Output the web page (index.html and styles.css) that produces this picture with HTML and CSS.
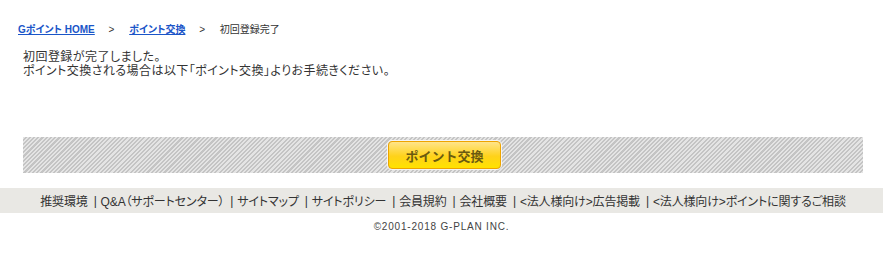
FILE: index.html
```html
<!DOCTYPE html>
<html>
<head>
  <title>初回登録完了</title>
  <link rel="stylesheet" href="styles.css">
</head>
<body>
  <div class="breadcrumb">
    <a href="#">Gポイント HOME</a>
    <span class="sep">&gt;</span>
    <a href="#">ポイント交換</a>
    <span class="sep">&gt;</span>
    <span class="current">初回登録完了</span>
  </div>

  <div class="message">
    <p>初回登録が完了しました。</p>
    <p>ポイント交換される場合は以下「ポイント交換」よりお手続きください。</p>
  </div>

  <div class="action-band">
    <button class="exchange-btn">ポイント交換</button>
  </div>

  <div class="footer-links">
    <a href="#">推奨環境</a><span class="bar">|</span><a href="#">Q&amp;A（サポートセンター）</a><span class="bar">|</span><a href="#">サイトマップ</a><span class="bar">|</span><a href="#">サイトポリシー</a><span class="bar">|</span><a href="#">会員規約</a><span class="bar">|</span><a href="#">会社概要</a><span class="bar">|</span><a href="#">&lt;法人様向け&gt;広告掲載</a><span class="bar">|</span><a href="#">&lt;法人様向け&gt;ポイントに関するご相談</a>
  </div>

  <div class="copyright">&copy;2001-2018 G-PLAN INC.</div>
</body>
</html>
```

FILE: styles.css
```css
body {
  font-family: "Liberation Sans", "Noto Sans CJK JP", sans-serif;
  font-feature-settings: "palt";
  color: #333;
  background-color: #fff;
  margin: 0;
  padding: 0;
}

.breadcrumb {
  font-size: 10px;
  padding: 21px 0 0 18px;
  height: 16px;
}

.breadcrumb a {
  color: #1a55c8;
  font-weight: bold;
  text-decoration: underline;
}

.breadcrumb .sep {
  margin: 0 12px 0 11px;
}

.breadcrumb .current {
  color: #333;
}

.message {
  font-size: 12px;
  letter-spacing: 0.45px;
  padding: 13px 0 0 23px;
  height: 87px;
}

.message p {
  margin: 0;
  line-height: 14px;
}

.action-band {
  margin: 0 20px 0 23px;
  height: 36px;
  display: flex;
  align-items: center;
  justify-content: center;
  background: repeating-linear-gradient(-45deg, #e4e4e4 0, #e4e4e4 1.5px, #c4c4c4 1.5px, #c4c4c4 3px);
}

.exchange-btn {
  width: 113px;
  height: 28px;
  margin-left: 3px;
  font-family: inherit;
  font-size: 13px;
  font-weight: bold;
  color: #6a5a10;
  background: linear-gradient(#ffe48a, #ffd21a 55%, #ffe200);
  border: 1px solid #eea400;
  border-radius: 4px;
  box-shadow: 0 0 0 1px #f4f4f4;
  cursor: pointer;
}

.footer-links {
  margin-top: 15px;
  height: 25px;
  background-color: #e9e8e4;
  display: flex;
  align-items: center;
  justify-content: center;
  font-size: 12px;
  letter-spacing: -0.15px;
  padding-left: 3px;
}

.footer-links a {
  color: #333;
  text-decoration: none;
}

.footer-links .bar {
  margin: 0 4px 0 6px;
}

.copyright {
  text-align: center;
  font-size: 10px;
  color: #444;
  margin-top: 8px;
  letter-spacing: 0.8px;
}
```
